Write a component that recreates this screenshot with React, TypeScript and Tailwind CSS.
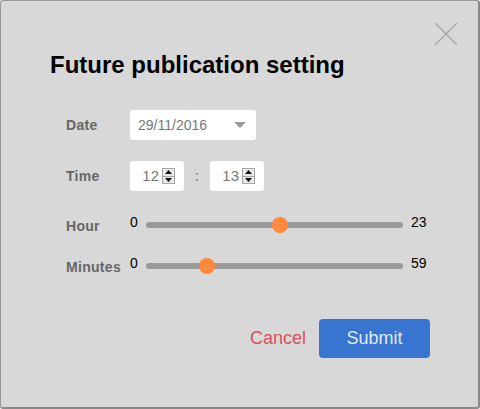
import React from "react";

const font = { fontFamily: '"Liberation Sans", Arial, sans-serif' };

const Spinner = () => (
  <div className="flex flex-col w-[13px] h-[16px] border border-[#a8a8a8] bg-[#e8e8e8] ml-[3px]">
    <div className="flex-1 flex items-center justify-center border-b border-[#a8a8a8]">
      <svg width="7" height="4" viewBox="0 0 7 4">
        <path d="M3.5 0 L7 4 L0 4 Z" fill="#111" />
      </svg>
    </div>
    <div className="flex-1 flex items-center justify-center">
      <svg width="7" height="4" viewBox="0 0 7 4">
        <path d="M0 0 L7 0 L3.5 4 Z" fill="#111" />
      </svg>
    </div>
  </div>
);

const NumberBox = ({ value }: { value: string }) => (
  <div className="flex items-center justify-end w-[54px] h-[30px] bg-white rounded-[3px] pr-[9px] text-[15px] text-[#777]">
    {value}
    <Spinner />
  </div>
);

const Slider = ({ label, max, value }: { label: string; max: number; value: number }) => {
  const pct = value / max;
  return (
    <div className="flex items-center h-[30px]">
      <span className="w-[64px] text-[14px] tracking-[0.3px] font-bold text-[#666] pt-[2px]">{label}</span>
      <span className="w-[16px] text-[14px] text-black -mt-[5px]">0</span>
      <div className="relative w-[257px] h-[6px] rounded-full bg-[#9a9a9a]">
        <div
          className="absolute top-1/2 w-[16px] h-[16px] -ml-[8px] -mt-[8px] rounded-full bg-[#ff8a3d]"
          style={{ left: `${pct * 100}%` }}
        />
      </div>
      <span className="ml-[8px] text-[14px] text-black -mt-[5px]">{max}</span>
    </div>
  );
};

export default function App() {
  return (
    <div style={font} className="w-[480px] h-[409px] bg-[#d8d8d8] border border-[#999] border-r-2 border-b-2 border-r-[#8a8a8a] border-b-[#8a8a8a] rounded-[3px] flex flex-col">
      <div className="flex justify-end pt-[21px] pr-[20px]">
        <svg width="24" height="24" viewBox="0 0 24 24">
          <path d="M1 1 L23 23 M23 1 L1 23" stroke="#a8a8a8" strokeWidth="1.5" />
        </svg>
      </div>
      <h1 className="pl-[49px] mt-[5px] text-[24px] leading-[28px] font-bold text-black">
        Future publication setting
      </h1>

      <div className="flex flex-col pl-[65px] mt-[31px]">
        <div className="flex items-center h-[30px]">
          <span className="w-[64px] text-[14px] tracking-[0.3px] font-bold text-[#666]">Date</span>
          <div className="flex items-center justify-between w-[126px] h-[30px] bg-white rounded-[3px] pl-[8px] pr-[10px] text-[14px] text-[#777]">
            29/11/2016
            <svg width="12" height="6" viewBox="0 0 12 6">
              <path d="M0 0 L12 0 L6 6 Z" fill="#999" />
            </svg>
          </div>
        </div>

        <div className="flex items-center h-[30px] mt-[21px]">
          <span className="w-[64px] text-[14px] tracking-[0.3px] font-bold text-[#666]">Time</span>
          <NumberBox value="12" />
          <span className="w-[26px] text-center text-[14px] text-[#666]">:</span>
          <NumberBox value="13" />
        </div>

        <div className="mt-[19px]">
          <Slider label="Hour" max={23} value={12} />
        </div>
        <div className="mt-[11px]">
          <Slider label="Minutes" max={59} value={14} />
        </div>
      </div>

      <div className="flex items-center justify-end gap-[13px] pr-[48px] mt-[38px]">
        <span className="text-[18px] text-[#d9505e]">Cancel</span>
        <button className="w-[111px] h-[39px] rounded-[4px] bg-[#3875d1] text-[18px] text-[#e2e8f2]">
          Submit
        </button>
      </div>
    </div>
  );
}
